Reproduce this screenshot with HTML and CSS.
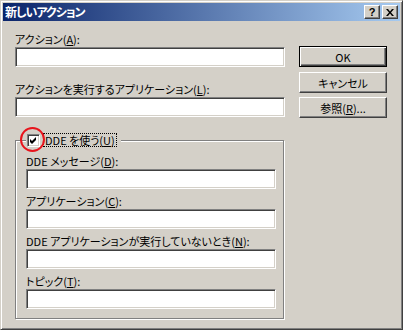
FILE: index.html
```html
<!DOCTYPE html>
<html lang="ja">
<head>
  <meta charset="UTF-8">
  <title>新しいアクション</title>
  <link rel="stylesheet" href="styles.css">
</head>
<body>
  <div class="window">
    <div class="titlebar">
      <span class="title">新しいアクション</span>
      <div class="title-buttons">
        <span class="tbtn help">?</span>
        <span class="tbtn">
          <svg width="8" height="7" viewBox="0 0 8 7"><path d="M0 0h2l2 2.5 2-2.5h2l-3 3.5 3 3.5h-2l-2-2.5-2 2.5h-2l3-3.5z"/></svg>
        </span>
      </div>
    </div>

    <div class="content">
      <div class="main">
        <div class="field">
          <label>アクション(<u>A</u>):</label>
          <input type="text" class="edit">
        </div>
        <div class="field">
          <label>アクションを実行するアプリケーション(<u>L</u>):</label>
          <input type="text" class="edit">
        </div>

        <fieldset class="group">
          <legend>
            <span class="checkbox">
              <svg width="9" height="9" viewBox="0 0 9 9"><polygon points="1,3 3,5 7,1 7,4 3,8 1,6"/></svg>
            </span>
            <span class="focus">DDE を使う(<u>U</u>)</span>
          </legend>
          <div class="field">
            <label>DDE メッセージ(<u>D</u>):</label>
            <input type="text" class="edit">
          </div>
          <div class="field">
            <label>アプリケーション(<u>C</u>):</label>
            <input type="text" class="edit">
          </div>
          <div class="field">
            <label>DDE アプリケーションが実行していないとき(<u>N</u>):</label>
            <input type="text" class="edit">
          </div>
          <div class="field">
            <label>トピック(<u>T</u>):</label>
            <input type="text" class="edit">
          </div>
        </fieldset>
      </div>

      <div class="buttons">
        <button class="btn default">OK</button>
        <button class="btn">キャンセル</button>
        <button class="btn">参照(<u>R</u>)...</button>
      </div>
    </div>

    <!-- 赤い丸の注釈 -->
    <span class="mark"></span>
  </div>
</body>
</html>
```

FILE: styles.css
```css
/* Windows 2000 風ダイアログ */
body {
  margin: 0;
  background: #d4d0c8;
  font-family: "Noto Sans CJK JP", sans-serif;
  font-size: 11px;
  font-feature-settings: "palt";
  color: #000;
}
.window {
  position: relative;
  width: 403px;
  height: 330px;
  box-sizing: border-box;
  padding: 2px;
  background: #d4d0c8;
  border: 1px solid;
  border-color: #d4d0c8 #404040 #404040 #d4d0c8;
  box-shadow: inset 1px 1px #fff, inset -1px -1px #808080;
}
.titlebar {
  height: 18px;
  display: flex;
  align-items: center;
  justify-content: space-between;
  background: linear-gradient(to right, #0a246a, #a6caf0);
}
.title {
  padding-left: 2px;
  color: #fff;
  font-size: 12px;
  font-weight: bold;
  letter-spacing: -1px;
  line-height: 18px;
}
.title-buttons {
  display: flex;
  gap: 2px;
  margin-right: 2px;
}
.tbtn {
  width: 16px;
  height: 14px;
  box-sizing: border-box;
  display: flex;
  align-items: center;
  justify-content: center;
  background: #d4d0c8;
  border: 1px solid;
  border-color: #fff #404040 #404040 #fff;
  box-shadow: inset -1px -1px #808080;
}
.tbtn.help {
  font-family: "Liberation Sans", sans-serif;
  font-weight: bold;
  font-size: 11px;
  line-height: 12px;
}
.content {
  display: flex;
}
.main {
  width: 270px;
  margin-left: 12px;
  padding-top: 11px;
}
.field label {
  display: block;
  height: 14px;
  line-height: 14px;
  margin-bottom: 1px;
  white-space: nowrap;
}
.field + .field {
  margin-top: 15px;
}
.edit {
  display: block;
  width: 270px;
  height: 20px;
  margin: 0;
  padding: 0 3px;
  box-sizing: border-box;
  background: #fff;
  border: 1px solid;
  border-color: #808080 #fff #fff #808080;
  box-shadow: inset 1px 1px #404040, inset -1px -1px #d4d0c8;
  font: inherit;
  outline: none;
}
.group {
  width: 269px;
  box-sizing: border-box;
  margin: 16px 0 0;
  padding: 7px 7px 9px 10px;
  border: 1px solid #808080;
  box-shadow: inset 1px 1px #fff, 1px 1px #fff;
}
.group legend {
  display: flex;
  align-items: center;
  height: 14px;
  padding: 0 4px 0 1px;
  background: #d4d0c8;
}
.group .field + .field {
  margin-top: 5px;
}
.group .edit {
  width: 250px;
}
.checkbox {
  width: 13px;
  height: 13px;
  box-sizing: border-box;
  display: flex;
  align-items: center;
  justify-content: center;
  background: #fff;
  border: 1px solid;
  border-color: #808080 #fff #fff #808080;
  box-shadow: inset 1px 1px #404040, inset -1px -1px #d4d0c8;
}
.focus {
  margin-left: 3px;
  padding: 0 1px;
  line-height: 12px;
  border: 1px dotted #000;
}
.buttons {
  width: 88px;
  margin-left: 14px;
  padding-top: 25px;
  display: flex;
  flex-direction: column;
}
.btn {
  height: 21px;
  margin: 0 0 4px;
  padding: 0;
  background: #d4d0c8;
  border: 1px solid;
  border-color: #fff #404040 #404040 #fff;
  box-shadow: inset -1px -1px #808080;
  font: inherit;
  color: #000;
}
.btn.default {
  margin-bottom: 5px;
  border-color: #000;
  box-shadow: inset 1px 1px #fff, inset -1px -1px #404040, inset -2px -2px #808080;
}
.mark {
  position: absolute;
  left: 19px;
  top: 126px;
  width: 25px;
  height: 25px;
  box-sizing: border-box;
  border: 2px solid #e8141c;
  border-radius: 50%;
}
```
